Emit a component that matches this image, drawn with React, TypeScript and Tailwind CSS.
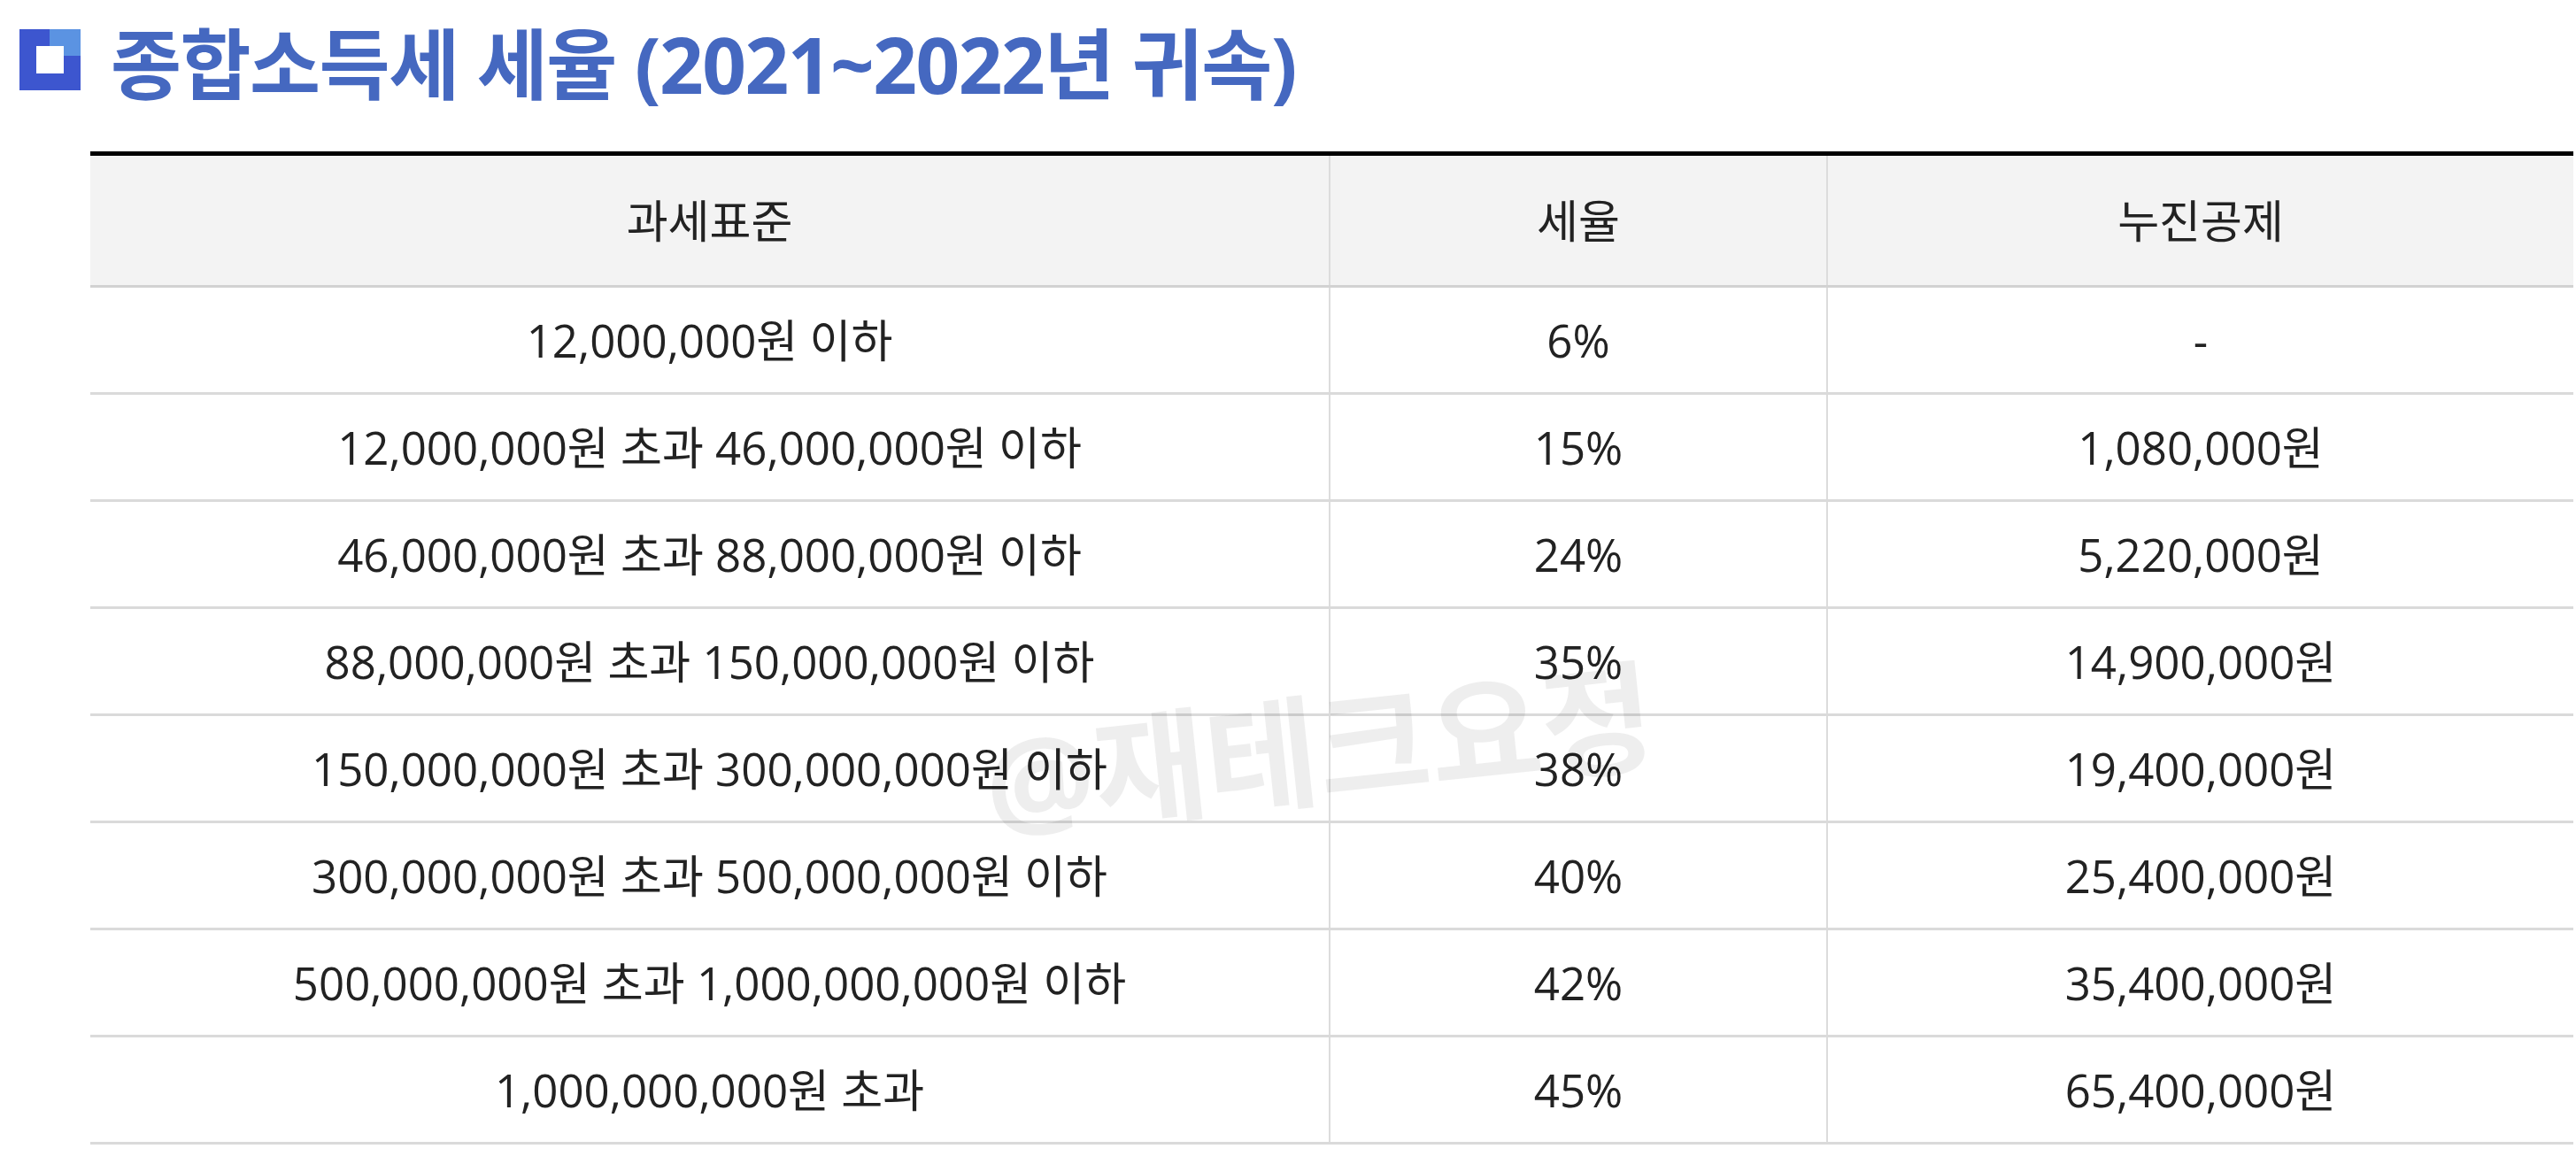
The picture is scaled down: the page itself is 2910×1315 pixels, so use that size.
import React from "react";

const rows: [string, string, string][] = [
  ["12,000,000원 이하", "6%", "-"],
  ["12,000,000원 초과 46,000,000원 이하", "15%", "1,080,000원"],
  ["46,000,000원 초과 88,000,000원 이하", "24%", "5,220,000원"],
  ["88,000,000원 초과 150,000,000원 이하", "35%", "14,900,000원"],
  ["150,000,000원 초과 300,000,000원 이하", "38%", "19,400,000원"],
  ["300,000,000원 초과 500,000,000원 이하", "40%", "25,400,000원"],
  ["500,000,000원 초과 1,000,000,000원 이하", "42%", "35,400,000원"],
  ["1,000,000,000원 초과", "45%", "65,400,000원"],
];

const font = { fontFamily: '"Open Sans", "Noto Sans CJK KR", sans-serif' };

export default function App() {
  return (
    <div
      className="relative w-[2910px] h-[1315px] bg-white overflow-hidden text-[#222]"
      style={font}
    >
      <div className="flex items-center h-[135px] pl-[22px]">
        <div className="relative w-[69px] h-[69px] bg-[#3d56cf] shrink-0">
          <div className="absolute right-0 top-0 w-[35px] h-[30px] bg-[#5b93e2]" />
          <div className="absolute left-[19px] top-[19px] w-[31px] h-[31px] bg-white" />
        </div>
        <h1 className="ml-[34px] mt-[10px] text-[87px] leading-none font-bold text-[#4568c0] tracking-[-1.5px] whitespace-nowrap">
          종합소득세 세율 (2021~2022년 귀속)
        </h1>
      </div>

      <div className="ml-[102px] mt-[36px] w-[2805px] border-t-[5px] border-black">
        <div className="grid grid-cols-[1401px_562px_842px] h-[149px] bg-[#f3f3f3] border-b-[3px] border-[#d2d2d2] text-[51px]">
          <div className="flex items-center justify-center border-r-2 border-[#dcdcdc]">과세표준</div>
          <div className="flex items-center justify-center border-r-2 border-[#dcdcdc]">세율</div>
          <div className="flex items-center justify-center">누진공제</div>
        </div>
        {rows.map((r, i) => (
          <div
            key={i}
            className="grid grid-cols-[1401px_562px_842px] h-[121px] border-b-[3px] border-[#dadada] text-[51px]"
          >
            <div className="flex items-center justify-center border-r-2 border-[#dcdcdc] whitespace-nowrap">{r[0]}</div>
            <div className="flex items-center justify-center border-r-2 border-[#dcdcdc]">{r[1]}</div>
            <div className="flex items-center justify-center whitespace-nowrap">{r[2]}</div>
          </div>
        ))}
      </div>

      <div className="pointer-events-none absolute left-[1490px] top-[845px] -translate-x-1/2 -translate-y-1/2 -rotate-6 text-[138px] font-bold leading-none text-[rgba(0,0,0,0.065)] whitespace-nowrap">
        @재테크요정
      </div>
    </div>
  );
}
